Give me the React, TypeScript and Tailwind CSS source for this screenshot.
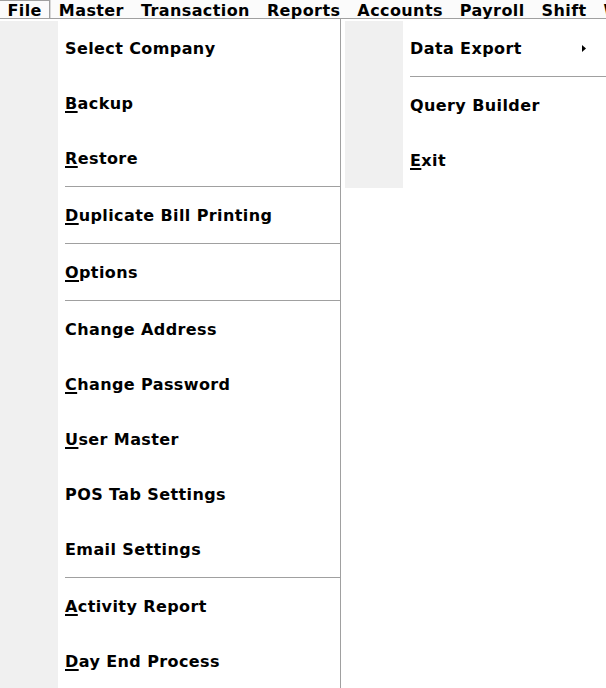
type Item = { label: string; key?: boolean; sub?: boolean } | "sep";

const fileItems: Item[] = [
  { label: "Select Company" },
  { label: "Backup", key: true },
  { label: "Restore", key: true },
  "sep",
  { label: "Duplicate Bill Printing", key: true },
  "sep",
  { label: "Options", key: true },
  "sep",
  { label: "Change Address" },
  { label: "Change Password", key: true },
  { label: "User Master", key: true },
  { label: "POS Tab Settings" },
  { label: "Email Settings" },
  "sep",
  { label: "Activity Report", key: true },
  { label: "Day End Process", key: true },
];

const moreItems: Item[] = [
  { label: "Data Export", sub: true },
  "sep",
  { label: "Query Builder" },
  { label: "Exit", key: true },
];

const bar = ["Master", "Transaction", "Reports", "Accounts", "Payroll", "Shift", "Window"];

const Label = ({ text, mnemonic }: { text: string; mnemonic?: boolean }) =>
  mnemonic ? (
    <span>
      <span className="underline decoration-[1.5px] underline-offset-[2px]">{text[0]}</span>
      {text.slice(1)}
    </span>
  ) : (
    <span>{text}</span>
  );

const MenuColumn = ({ items, width }: { items: Item[]; width: string }) => (
  <div className={`flex flex-col pt-[2px] ${width}`}>
    {items.map((it, i) =>
      it === "sep" ? (
        <div key={i} className="flex h-[2px]">
          <div className="w-[58px] shrink-0 bg-[#f0f0f0]" />
          <div className="flex-1 pl-[7px]">
            <div className="h-px bg-[#a0a0a0]" />
          </div>
        </div>
      ) : (
        <div key={i} className="flex h-[55px]">
          <div className="w-[58px] shrink-0 bg-[#f0f0f0]" />
          <div className="flex flex-1 items-center justify-between pl-[7px] pr-[20px]">
            <Label text={it.label} mnemonic={it.key} />
            {it.sub && (
              <svg width="4" height="7" viewBox="0 0 4 7">
                <path d="M0 0 L4 3.5 L0 7 Z" fill="#000" />
              </svg>
            )}
          </div>
        </div>
      )
    )}
  </div>
);

export default function App() {
  return (
    <div
      className="h-[688px] w-[606px] overflow-hidden bg-white text-[16px] font-bold tracking-[0.4px] text-black"
      style={{ fontFamily: '"DejaVu Sans", Verdana, sans-serif' }}
    >
      <div className="flex h-[19px] border-b border-[#a0a0a0] bg-[#fbfbfb] whitespace-nowrap leading-[18px]">
        <div className="h-full border-t border-r border-[#a0a0a0] px-[7.5px] pt-[1px] shadow-[1px_0_0_#d8d8d8]">
          File
        </div>
        {bar.map((b) => (
          <div key={b} className="px-[8.5px] pt-[2px]">
            {b}
          </div>
        ))}
      </div>
      <div className="flex">
        <div className="border-r border-[#a0a0a0]">
          <MenuColumn items={fileItems} width="w-[340px]" />
        </div>
        <div className="pl-[4px]">
          <MenuColumn items={moreItems} width="w-[261px]" />
        </div>
      </div>
    </div>
  );
}
